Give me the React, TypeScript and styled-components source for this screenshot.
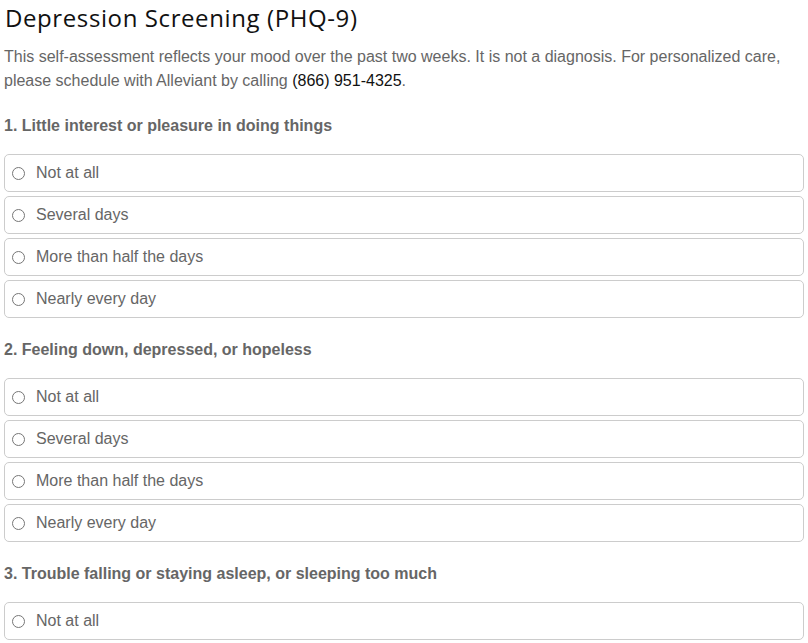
import React from 'react';
import styled, { createGlobalStyle } from 'styled-components';

const GlobalStyle = createGlobalStyle`
  body {
    margin: 0;
    background: #ffffff;
    font-family: "Liberation Sans", Arial, sans-serif;
  }
`;

const Page = styled.div`
  padding: 0 4px;
`;

const Title = styled.h1`
  margin: 0 0 0 1px;
  padding-top: 2px;
  font-family: "Open Sans", "DejaVu Sans", sans-serif;
  font-weight: 400;
  font-size: 24px;
  letter-spacing: 0.6px;
  line-height: 32px;
  color: #111;
`;

const Intro = styled.p`
  margin: 11px 0 21px;
  font-size: 16px;
  line-height: 24px;
  color: #666;
`;

const Phone = styled.span`
  color: #111;
`;

const Section = styled.fieldset`
  border: 0;
  margin: 0 0 20px;
  padding: 0;
  min-width: 0;
`;

const Question = styled.legend`
  padding: 0;
  margin: 0 0 16px;
  font-size: 16px;
  line-height: 24px;
  font-weight: 700;
  color: #666;
`;

const Options = styled.div`
  display: flex;
  flex-direction: column;
  gap: 4px;
`;

const Option = styled.label`
  display: flex;
  align-items: center;
  height: 38px;
  box-sizing: border-box;
  border: 1px solid #cccccc;
  border-radius: 5px;
  padding: 0 8px 0 7px;
  font-size: 16px;
  color: #666;
  cursor: pointer;
`;

const Radio = styled.input.attrs({ type: 'radio' })`
  margin: 0 11px 0 0;
  width: 13px;
  height: 13px;
`;

const answers = ['Not at all', 'Several days', 'More than half the days', 'Nearly every day'];

const questions = [
  'Little interest or pleasure in doing things',
  'Feeling down, depressed, or hopeless',
  'Trouble falling or staying asleep, or sleeping too much',
];

export default function App() {
  return (
    <Page>
      <GlobalStyle />
      <Title>Depression Screening (PHQ-9)</Title>
      <Intro>
        This self-assessment reflects your mood over the past two weeks. It is not a diagnosis. For
        personalized care, please schedule with Alleviant by calling <Phone>(866) 951-4325</Phone>.
      </Intro>
      {questions.map((q, i) => (
        <Section key={q}>
          <Question>
            {i + 1}. {q}
          </Question>
          <Options>
            {answers.map((a) => (
              <Option key={a}>
                <Radio name={`q${i + 1}`} value={a} />
                {a}
              </Option>
            ))}
          </Options>
        </Section>
      ))}
    </Page>
  );
}
